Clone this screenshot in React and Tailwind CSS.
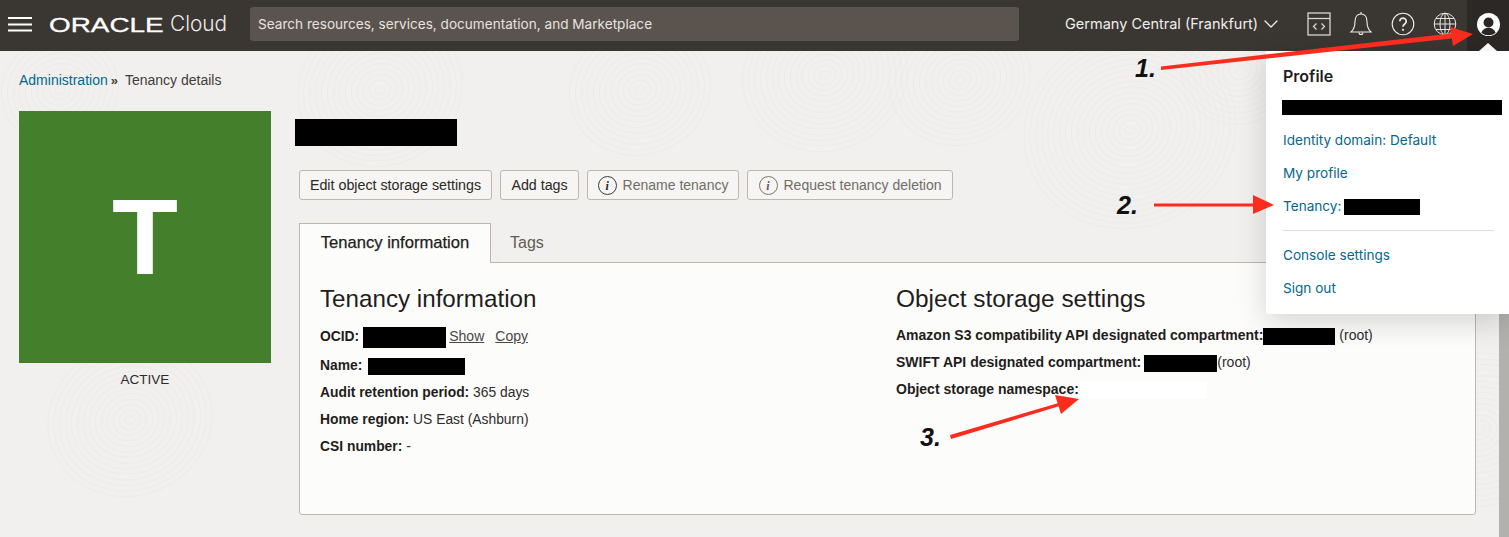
import React from 'react';
import { ChevronDown } from 'lucide-react';

const body = "font-['Liberation_Sans',sans-serif]";
const ui = "font-['Inter','Noto_Sans',sans-serif]";
const redact = "inline-block bg-black align-middle";

// faint fingerprint-like swirls behind the page
const swirls = [
  [130, 420, 14], [420, 330, 18], [825, 75, 14], [960, 80, 12], [640, 90, 12], [380, 90, 14], [1130, 130, 18], [1240, 70, 10], [1480, 430, 14], [60, 90, 10],
];

function Texture() {
  return (
    <svg className="absolute inset-0 w-full h-full" fill="none" stroke="#ecebe9" strokeWidth="1">
      {swirls.map(([cx, cy, n]) =>
        Array.from({ length: n }, (_, i) => (
          <ellipse key={`${cx}-${i}`} cx={cx} cy={cy} rx={5 + i * 6} ry={4 + i * 5.5} transform={`rotate(-20 ${cx} ${cy})`} />
        ))
      )}
    </svg>
  );
}

function Hamburger() {
  return (
    <svg width="24" height="15" viewBox="0 0 24 15" fill="#fff" className="ml-[8px]">
      <rect y="0" width="24" height="2" />
      <rect y="6.500" width="24" height="2" />
      <rect y="12.500" width="24" height="2" />
    </svg>
  );
}

function ConsoleIcon() {
  return (
    <svg width="24" height="24" viewBox="0 0 24 24" fill="none" stroke="#d9d6d3" strokeWidth="1.3">
      <rect x="1" y="1" width="22" height="22" />
      <path d="M1 6.500h22" />
      <path d="M9.500 11.500 6.500 14.500l3 3M14.500 11.500l3 3-3 3" />
    </svg>
  );
}

function BellIcon() {
  return (
    <svg width="24" height="26" viewBox="0 0 24 26" fill="none" stroke="#f0eeec" strokeWidth="1.1">
      <path d="M12 3c-3.800 0-6 3.200-6 7.500 0 5-1.200 8-4 10.500h20c-2.800-2.500-4-5.500-4-10.500C18 6.200 15.800 3 12 3z" />
      <path d="M12 1v2M10 21.500a2 2 0 0 0 4 0" />
    </svg>
  );
}

function HelpIcon() {
  return (
    <svg width="24" height="24" viewBox="0 0 24 24" fill="none" stroke="#f0eeec" strokeWidth="1.1">
      <circle cx="12" cy="12" r="10.800" />
      <path d="M8.800 9.300a3.200 3.200 0 1 1 4.900 2.700c-1.100.7-1.700 1.300-1.700 2.700" strokeWidth="1.700" />
      <circle cx="12" cy="17.800" r="1.100" fill="#f0eeec" stroke="none" />
    </svg>
  );
}

function GlobeIcon() {
  return (
    <svg width="24" height="24" viewBox="0 0 24 24" fill="none" stroke="#e8e6e4" strokeWidth="1">
      <circle cx="12" cy="12" r="10.800" />
      <ellipse cx="12" cy="12" rx="5" ry="10.800" />
      <path d="M12 1.200v21.600M1.200 12h21.600M3 6.500h18M3 17.500h18" />
    </svg>
  );
}

function AvatarIcon() {
  return (
    <svg width="23" height="23" viewBox="0 0 24 24">
      <circle cx="12" cy="12" r="12" fill="#fff" />
      <circle cx="12" cy="10" r="5.200" fill="#2b2724" />
      <path d="M4.500 20.500c1.500-3.500 4-5 7.500-5s6 1.500 7.500 5a12 12 0 0 1-15 0z" fill="#2b2724" />
    </svg>
  );
}

function InfoIcon({ dark }) {
  return (
    <span className={`w-[19px] h-[19px] rounded-full border flex items-center justify-center font-['Liberation_Serif',serif] italic font-bold text-[12px] ${dark ? 'border-[#3f3c39] text-[#2b2926]' : 'border-[#7b7772] text-[#5f5b57]'}`}>
      i
    </span>
  );
}

function Btn({ children, disabled, dark, className }) {
  return (
    <button className={`h-[30px] pt-px flex items-center justify-center gap-[6px] rounded-[3px] border border-[#bdb7b0] bg-[#f6f5f3] ${disabled ? 'text-[14px] text-[#716d68]' : 'text-[14.250px] text-[#2b2926]'} ${className}`}>
      {disabled && <InfoIcon dark={dark} />}
      {children}
    </button>
  );
}

function Row({ label, className, children }) {
  return (
    <div className={`leading-[27px] h-[27px] text-[#2e2c2a] whitespace-nowrap ${className || ''}`}>
      <b className="text-[#1f1d1b]">{label}</b>{children}
    </div>
  );
}

function ProfileLink({ children }) {
  return <div className="h-[33px] leading-[33px] text-[13.600px] text-[#04688a] whitespace-nowrap">{children}</div>;
}

function Annotations() {
  const num = "absolute font-['Liberation_Sans',sans-serif] italic font-bold text-[25px] leading-none text-[#111]";
  return (
    <>
      <svg className="absolute inset-0 w-full h-full pointer-events-none" fill="#f92c1e" stroke="none">
        <path d="M1161 66.500 L1455 33 L1456 38 L1161 70 Z" />
        <path d="M1450 27 L1473 34 L1453 46 Z" />
        <path d="M1154 203.500 H1254 V206.500 H1154 Z" />
        <path d="M1253 195 L1274 205 L1253 214 Z" />
        <path d="M950 435 L1062 402 L1063 405 L951 439 Z" />
        <path d="M1055 395 L1079 399 L1061 414 Z" />
      </svg>
      <span className={`${num} left-[1135px] top-[56px]`}>1.</span>
      <span className={`${num} left-[1117px] top-[193px]`}>2.</span>
      <span className={`${num} left-[920px] top-[425px]`}>3.</span>
    </>
  );
}

export default function App() {
  return (
    <div className={`relative h-[537px] w-[1509px] overflow-hidden bg-[#f1f0ee] ${body}`}>
      <Texture />

      <header className="relative h-[51px] pb-[3px] bg-[#3a3632] flex items-center text-white">
        <Hamburger />
        <span className="ml-[17px] mt-[2px] w-[115px] text-[20.500px] leading-none origin-left scale-x-[1.36] [-webkit-text-stroke:0.3px_#fff]">ORACLE</span>
        <span className="ml-[6px] w-[58px] text-[20.800px] font-light text-[#eeecea] font-['Inter',sans-serif]">Cloud</span>
        <div className={`ml-[22px] w-[769px] h-[34px] rounded-[3px] bg-[#5b534d] flex items-center pl-[8px] text-[13.600px] text-[#e6e3e0] ${ui}`}>
          Search resources, services, documentation, and Marketplace
        </div>
        <div className={`ml-[46px] flex items-center text-[14.500px] text-[#f0eeec] whitespace-nowrap ${ui}`}>
          Germany Central (Frankfurt)
          <ChevronDown size={24} strokeWidth={1.3} className="ml-[1px]" />
        </div>
        <div className="ml-[15px] flex items-center">
          <div className="w-[42px] flex justify-center"><ConsoleIcon /></div>
          <div className="w-[42px] flex justify-center"><BellIcon /></div>
          <div className="w-[42px] flex justify-center"><HelpIcon /></div>
          <div className="w-[42px] flex justify-center"><GlobeIcon /></div>
        </div>
        <div className="relative ml-auto -mb-[3px] w-[42px] self-stretch bg-[#2c2825] flex items-center justify-center pb-[3px]">
          <AvatarIcon />
          <span className="absolute bottom-0 left-[12px] w-0 h-0 border-x-[9px] border-x-transparent border-b-[8px] border-b-white" />
        </div>
      </header>

      <main className="relative pl-[19px] pt-[19px]">
        <div className="h-[20px] leading-[20px] text-[14px] text-[#3f3d3a]">
          <a className="text-[#04688a]">Administration</a>
          <span className="text-[13px] font-bold mx-[3px]">»</span>
          <span className="ml-[4px]">Tenancy details</span>
        </div>

        <div className="flex mt-[21px]">
          <div className="w-[252px] flex flex-col items-center">
            <div className="w-[252px] h-[252px] bg-[#44802c] flex items-center justify-center">
              <span className="text-white font-bold text-[108px] leading-none">T</span>
            </div>
            <div className="mt-[7px] text-[13.500px] text-[#2e2c2a]">ACTIVE</div>
          </div>

          <div className="ml-[28px] w-[1177px]">
            <div className="h-[27px] w-[162px] bg-black mt-[8px] -ml-[4px]" />

            <div className="flex mt-[24px] gap-[8px]">
              <Btn className="w-[193px]">Edit object storage settings</Btn>
              <Btn className="w-[79px]">Add tags</Btn>
              <Btn disabled dark className="w-[152px]">Rename tenancy</Btn>
              <Btn disabled className="w-[206px]">Request tenancy deletion</Btn>
            </div>

            <div className="flex mt-[23px] relative z-10">
              <div className="w-[192px] h-[40px] -mb-px bg-[#fcfcfb] border border-[#bdb7b0] border-b-0 flex items-center justify-center text-[16.600px] text-[#1f1d1b] [-webkit-text-stroke:0.25px_#1f1d1b]">
                Tenancy information
              </div>
              <div className="ml-[19px] h-[39px] flex items-center text-[16px] text-[#5f5b57]">Tags</div>
            </div>

            <section className="h-[253px] bg-[#fcfcfb] border border-[#bdb7b0] rounded-b-[3px] flex pl-[20px] pt-[20px]">
              <div className="w-[576px] text-[13.850px]">
                <h2 className="text-[24.200px] leading-[32px] text-[#1f1d1b] mb-[8px]">Tenancy information</h2>
                <Row label="OCID:" className="mb-[2px]">
                  <span className={`${redact} w-[83px] h-[21px] ml-[4px] mr-[3px]`} />
                  <a className="underline text-[14px] text-[#4a4744]">Show</a>
                  <a className="underline text-[14px] text-[#4a4744] ml-[11px]">Copy</a>
                </Row>
                <Row label="Name:"><span className={`${redact} w-[97px] h-[17px] ml-[6px]`} /></Row>
                <Row label="Audit retention period:"> 365 days</Row>
                <Row label="Home region:"> US East (Ashburn)</Row>
                <Row label="CSI number:"> -</Row>
              </div>
              <div className="text-[14px]">
                <h2 className="text-[24.400px] leading-[32px] text-[#1f1d1b] mb-[7px]">Object storage settings</h2>
                <Row label="Amazon S3 compatibility API designated compartment:">
                  <span className={`${redact} w-[72px] h-[17px]`} /> (root)
                </Row>
                <Row label="SWIFT API designated compartment:">
                  <span className={`${redact} w-[73px] h-[17px] ml-[3px]`} />(root)
                </Row>
                <Row label="Object storage namespace:">
                  <span className="inline-block align-middle w-[128px] h-[18px] bg-white" />
                </Row>
              </div>
            </section>
          </div>
        </div>
      </main>

      <div className="absolute right-0 top-[314px] w-[10px] h-[223px] bg-[#b3b1ae]" />

      <aside className={`absolute left-[1266px] top-[51px] w-[243px] h-[263px] bg-white rounded-bl-[3px] shadow-[0_8px_30px_rgba(0,0,0,0.16)] pl-[17px] pt-[14px] ${ui}`}>
        <div className="text-[16px] leading-[22px] font-semibold text-[#1f1d1b]">Profile</div>
        <div className="w-[220px] h-[15px] bg-black mt-[13px] mb-[9px] -ml-px" />
        <ProfileLink>Identity domain: Default</ProfileLink>
        <ProfileLink>My profile</ProfileLink>
        <ProfileLink>Tenancy: <span className={`${redact} w-[76px] h-[16px] -ml-px`} /></ProfileLink>
        <div className="w-[211px] h-px bg-[#e2dfdb] mt-[7px] mb-[8px]" />
        <ProfileLink>Console settings</ProfileLink>
        <ProfileLink>Sign out</ProfileLink>
      </aside>

      <Annotations />
    </div>
  );
}
